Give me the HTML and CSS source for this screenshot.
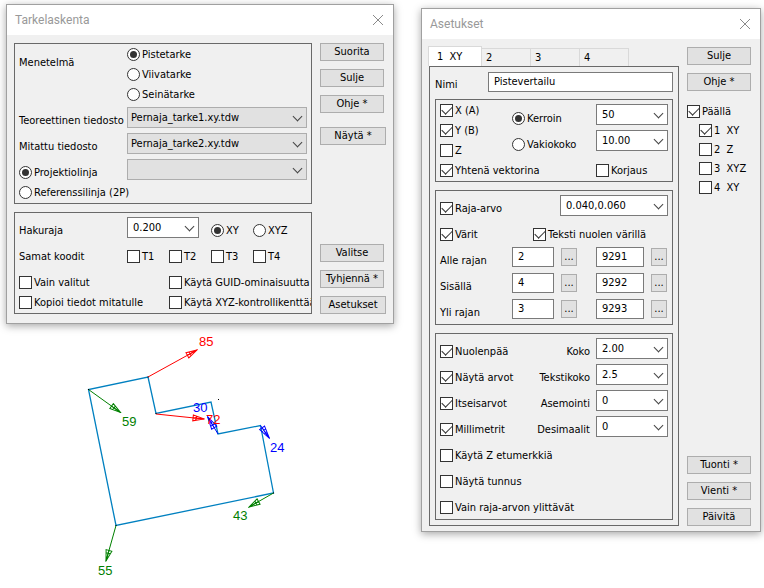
FILE: index.html
```html
<!DOCTYPE html>
<html lang="fi">
<head>
  <meta charset="utf-8">
  <title>Tarkelaskenta</title>
  <link rel="stylesheet" href="styles.css">
</head>
<body>
  <main class="workspace">
    <div class="left">
      <section class="window">
        <header class="titlebar">
          <h1>Tarkelaskenta</h1>
          <button class="close" aria-label="Sulje ikkuna">
            <svg width="10" height="10" viewBox="0 0 10 10"><path d="M0 0L10 10M10 0L0 10"/></svg>
          </button>
        </header>
        <div class="content calc">
          <div class="groups">
            <div class="group files">
              <div class="method">
                <span class="method-label">Menetelmä</span>
                <div class="method-list">
                  <label class="check"><input type="radio" name="method" checked>Pistetarke</label>
                  <label class="check"><input type="radio" name="method">Viivatarke</label>
                  <label class="check"><input type="radio" name="method">Seinätarke</label>
                </div>
              </div>
              <div class="row">
                <label class="caption" for="theory">Teoreettinen tiedosto</label>
                <div class="combo grey fill"><select id="theory"><option>Pernaja_tarke1.xy.tdw</option></select></div>
              </div>
              <div class="row">
                <label class="caption" for="measured">Mitattu tiedosto</label>
                <div class="combo grey fill"><select id="measured"><option>Pernaja_tarke2.xy.tdw</option></select></div>
              </div>
              <div class="row">
                <label class="check caption"><input type="radio" name="line" checked>Projektiolinja</label>
                <div class="combo grey fill"><select aria-label="Projektiolinja"><option></option></select></div>
              </div>
              <label class="check"><input type="radio" name="line">Referenssilinja (2P)</label>
            </div>

            <div class="group search">
              <div class="row">
                <label class="caption" for="limit">Hakuraja</label>
                <div class="combo small"><select id="limit"><option>0.200</option></select></div>
                <label class="check code after-combo"><input type="radio" name="dim" checked>XY</label>
                <label class="check code"><input type="radio" name="dim">XYZ</label>
              </div>
              <div class="row">
                <span class="caption">Samat koodit</span>
                <label class="check code"><input type="checkbox">T1</label>
                <label class="check code"><input type="checkbox">T2</label>
                <label class="check code"><input type="checkbox">T3</label>
                <label class="check code"><input type="checkbox">T4</label>
              </div>
              <div class="row">
                <label class="check half"><input type="checkbox">Vain valitut</label>
                <label class="check"><input type="checkbox">Käytä GUID-ominaisuutta</label>
              </div>
              <div class="row low">
                <label class="check half"><input type="checkbox">Kopioi tiedot mitatulle</label>
                <label class="check"><input type="checkbox">Käytä XYZ-kontrollikenttää</label>
              </div>
            </div>
          </div>

          <div class="side">
            <button class="btn">Suorita</button>
            <button class="btn">Sulje</button>
            <button class="btn">Ohje *</button>
            <button class="btn wide show">Näytä *</button>
            <button class="btn push">Valitse</button>
            <button class="btn">Tyhjennä *</button>
            <button class="btn wide">Asetukset</button>
          </div>
        </div>
      </section>

      <svg class="drawing" viewBox="6 324 388 264">
        <defs>
          <marker id="head-red" class="red" viewBox="-1 -1 13 8" markerWidth="13" markerHeight="8" refX="11" refY="3" orient="auto" markerUnits="userSpaceOnUse">
            <path d="M0 0L11 3L0 6ZM0 3H11M3 1V5"/>
          </marker>
          <marker id="head-green" class="green" viewBox="-1 -1 13 8" markerWidth="13" markerHeight="8" refX="11" refY="3" orient="auto" markerUnits="userSpaceOnUse">
            <path d="M0 0L11 3L0 6ZM0 3H11M3 1V5"/>
          </marker>
          <marker id="head-blue" class="blue" viewBox="-1 -1 15 8" markerWidth="15" markerHeight="8" refX="13" refY="3" orient="auto" markerUnits="userSpaceOnUse">
            <path d="M0 0L13 3L0 6ZM0 3H13M3 1V5M6 2V4"/>
          </marker>
        </defs>
        <polygon class="outline" points="148,377 156,413.5 211,402 218,434 260.5,425.5 273.5,493 116,525.5 88.5,389.5"/>
        <g class="red">
          <path marker-end="url(#head-red)" d="M148 377L197 350"/>
          <path marker-end="url(#head-red)" d="M156 414L204 419"/>
          <text x="199" y="346">85</text>
        </g>
        <g class="green">
          <path marker-end="url(#head-green)" d="M88.5 389.5L120.5 412.5"/>
          <path marker-end="url(#head-green)" d="M116 525.5L106 561"/>
          <path marker-end="url(#head-green)" d="M273.5 493L249 507"/>
          <text x="122" y="426">59</text>
          <text x="98" y="575">55</text>
          <text x="233" y="520">43</text>
        </g>
        <g class="blue">
          <path marker-end="url(#head-blue)" d="M218 434L207.5 416.5"/>
          <path marker-end="url(#head-blue)" d="M260.5 425.5L269.5 438.5"/>
          <text x="193" y="412">30</text>
          <text x="270" y="452">24</text>
        </g>
        <g class="red"><text x="206" y="424">72</text></g>
        <path class="dots" d="M218 399.5h1M147.500 377h1M155.500 413.500h1M88 389.500h1M115.500 525.500h1M273 493h1"/>
      </svg>
    </div>

    <section class="window settings">
      <header class="titlebar">
        <h1>Asetukset</h1>
        <button class="close" aria-label="Sulje ikkuna">
          <svg width="10" height="10" viewBox="0 0 10 10"><path d="M0 0L10 10M10 0L0 10"/></svg>
        </button>
      </header>
      <div class="content">
        <div class="tabbed">
          <nav class="tabs">
            <button class="tab active">1&nbsp; XY</button>
            <button class="tab">2</button>
            <button class="tab">3</button>
            <button class="tab">4</button>
          </nav>
          <div class="panel">
            <div class="name-row">
              <label for="name">Nimi</label>
              <input class="field" id="name" type="text" value="Pistevertailu">
            </div>

            <div class="group vector">
              <div class="columns">
                <div class="axes">
                  <label class="check"><input type="checkbox" checked>X (A)</label>
                  <label class="check"><input type="checkbox" checked>Y (B)</label>
                  <label class="check"><input type="checkbox">Z</label>
                </div>
                <div class="scale">
                  <label class="check"><input type="radio" name="scale" checked>Kerroin</label>
                  <label class="check"><input type="radio" name="scale">Vakiokoko</label>
                </div>
                <div class="values">
                  <div class="combo small"><select aria-label="Kerroin"><option>50</option></select></div>
                  <div class="combo small"><select aria-label="Vakiokoko"><option>10.00</option></select></div>
                </div>
              </div>
              <div class="columns last">
                <label class="check"><input type="checkbox" checked>Yhtenä vektorina</label>
                <label class="check fix"><input type="checkbox">Korjaus</label>
              </div>
            </div>

            <div class="group">
              <div class="row spread">
                <label class="check"><input type="checkbox" checked>Raja-arvo</label>
                <div class="combo medium"><select aria-label="Raja-arvo"><option>0.040,0.060</option></select></div>
              </div>
              <div class="row">
                <label class="check color"><input type="checkbox" checked>Värit</label>
                <label class="check"><input type="checkbox" checked>Teksti nuolen värillä</label>
              </div>
              <div class="row limit">
                <label for="below">Alle rajan</label>
                <input class="field" id="below" type="text" value="2">
                <button class="more">...</button>
                <input class="field code-field" type="text" value="9291" aria-label="Alle rajan koodi">
                <button class="more">...</button>
              </div>
              <div class="row limit">
                <label for="inside">Sisällä</label>
                <input class="field" id="inside" type="text" value="4">
                <button class="more">...</button>
                <input class="field code-field" type="text" value="9292" aria-label="Sisällä koodi">
                <button class="more">...</button>
              </div>
              <div class="row limit">
                <label for="above">Yli rajan</label>
                <input class="field" id="above" type="text" value="3">
                <button class="more">...</button>
                <input class="field code-field" type="text" value="9293" aria-label="Yli rajan koodi">
                <button class="more">...</button>
              </div>
            </div>

            <div class="group">
              <div class="row">
                <label class="check"><input type="checkbox" checked>Nuolenpää</label>
                <label class="right" for="size">Koko</label>
                <div class="combo small"><select id="size"><option>2.00</option></select></div>
              </div>
              <div class="row">
                <label class="check"><input type="checkbox" checked>Näytä arvot</label>
                <label class="right" for="text-size">Tekstikoko</label>
                <div class="combo small"><select id="text-size"><option>2.5</option></select></div>
              </div>
              <div class="row">
                <label class="check"><input type="checkbox" checked>Itseisarvot</label>
                <label class="right" for="position">Asemointi</label>
                <div class="combo small"><select id="position"><option>0</option></select></div>
              </div>
              <div class="row">
                <label class="check"><input type="checkbox" checked>Millimetrit</label>
                <label class="right" for="decimals">Desimaalit</label>
                <div class="combo small"><select id="decimals"><option>0</option></select></div>
              </div>
              <div class="row"><label class="check"><input type="checkbox">Käytä Z etumerkkiä</label></div>
              <div class="row"><label class="check"><input type="checkbox">Näytä tunnus</label></div>
              <div class="row"><label class="check"><input type="checkbox">Vain raja-arvon ylittävät</label></div>
            </div>
          </div>
        </div>

        <div class="side">
          <button class="btn">Sulje</button>
          <button class="btn">Ohje *</button>
          <div class="layers">
            <label class="check"><input type="checkbox" checked>Päällä</label>
            <div class="layer-list">
              <label class="check"><input type="checkbox" checked>1&nbsp; XY</label>
              <label class="check"><input type="checkbox">2&nbsp; Z</label>
              <label class="check"><input type="checkbox">3&nbsp; XYZ</label>
              <label class="check"><input type="checkbox">4&nbsp; XY</label>
            </div>
          </div>
          <button class="btn push">Tuonti *</button>
          <button class="btn">Vienti *</button>
          <button class="btn">Päivitä</button>
        </div>
      </div>
    </section>
  </main>
</body>
</html>
```

FILE: styles.css
```css
* {
  box-sizing: border-box;
}
body {
  margin: 0;
  background: #fff;
  color: #000;
  font: 11px/15px "DejaVu Sans Condensed", "DejaVu Sans", sans-serif;
}
button, input, select {
  font: inherit;
  color: inherit;
  margin: 0;
  border-radius: 0;
}
.workspace {
  display: grid;
  grid-template-columns: minmax(0, 388fr) minmax(0, 340fr);
  align-items: start;
  gap: 27px;
  padding: 4px 3px 0 6px;
}

/* windows */
.window {
  background: #f0f0f0;
  border: 1px solid #a0a0a0;
  box-shadow: 0 2px 8px rgba(0, 0, 0, 0.35);
}
.settings {
  margin-top: 4px;
}
.titlebar {
  display: flex;
  align-items: center;
  justify-content: space-between;
  height: 30px;
  padding: 0 10px 0 8px;
  background: #fff;
}
.titlebar h1 {
  margin: 0;
  font: 12px/16px Roboto, sans-serif;
  color: #999;
}
.close {
  padding: 0;
  border: none;
  background: none;
  line-height: 0;
}
.close svg {
  overflow: visible;
  fill: none;
  stroke: #8a8a8a;
}
.content {
  display: flex;
  gap: 8px;
  padding: 8px 7px 5px;
}
.calc {
  padding-bottom: 9px;
}
.groups, .tabbed {
  flex: 1;
  min-width: 0;
}
.groups {
  display: flex;
  flex-direction: column;
  gap: 8px;
}
.group {
  display: flex;
  flex-direction: column;
  gap: 5px;
  padding: 4px;
  border: 1px solid #696969;
}
.row {
  display: flex;
  align-items: flex-end;
  height: 21px;
}
.low {
  height: 15px;
}

/* tick boxes and radios */
.check {
  display: flex;
  align-items: center;
  gap: 2px;
  white-space: nowrap;
}
.check input {
  appearance: none;
  flex: none;
  display: grid;
  place-items: center;
  width: 13px;
  height: 13px;
  border: 1px solid #333;
  background: #fff;
}
.check input[type="radio"] {
  border-radius: 50%;
}
.check input[type="radio"]:checked::after {
  content: "";
  width: 7px;
  height: 7px;
  border-radius: 50%;
  background: #333;
}
.check input[type="checkbox"]:checked::after {
  content: "";
  width: 9px;
  height: 5px;
  margin-bottom: 3px;
  border: solid #333;
  border-width: 0 0 1px 1px;
  transform: rotate(-45deg);
}

/* drop-downs and fields */
.combo {
  position: relative;
  height: 21px;
}
.combo select {
  appearance: none;
  display: block;
  width: 100%;
  height: 21px;
  padding: 0 16px 1px 5px;
  border: 1px solid #7a7a7a;
  background: #fff;
}
.combo::after {
  content: "";
  position: absolute;
  top: 6px;
  right: 6px;
  width: 6px;
  height: 6px;
  border: solid #444;
  border-width: 0 1px 1px 0;
  transform: rotate(45deg);
  pointer-events: none;
}
.combo.grey select {
  padding: 0 16px 0 3px;
  border-color: #adadad;
  background: #e1e1e1;
}
.fill {
  flex: 1;
}
.small {
  width: 72px;
}
.medium {
  width: 108px;
}
.field {
  min-width: 0;
  height: 20px;
  padding: 0 5px 1px;
  border: 1px solid #7a7a7a;
  background: #fff;
}

/* buttons */
.side {
  display: flex;
  flex-direction: column;
  gap: 8px;
  width: 66px;
}
.btn, .more {
  padding: 0;
  border: 1px solid #adadad;
  background: #e1e1e1;
}
.btn {
  width: 64px;
  height: 18px;
  line-height: 16px;
}
.wide {
  width: 66px;
}
.show {
  margin-top: 6px;
}
.push {
  margin-top: auto;
}

/* Tarkelaskenta */
.files {
  padding: 0 4px 3px;
}
.search {
  padding-bottom: 3px;
  overflow: hidden;
}
.method {
  display: flex;
  margin-bottom: -2px;
}
.method-label {
  width: 108px;
  padding-top: 11px;
}
.method-list .check, .axes .check, .last .check {
  height: 20px;
}
.caption {
  flex: none;
  width: 108px;
}
.code {
  width: 42px;
}
.after-combo {
  margin-left: 12px;
}
.half {
  flex: none;
  width: 150px;
}

/* Asetukset */
.tabs {
  display: flex;
  align-items: flex-end;
  height: 19px;
}
.tab {
  width: 49px;
  height: 18px;
  padding: 0 4px;
  border: 1px solid #d9d9d9;
  border-width: 1px 1px 0 0;
  background: #f0f0f0;
  text-align: left;
}
.tab.active {
  width: 54px;
  height: 20px;
  margin-left: -1px;
  padding: 0 8px;
  border-left-width: 1px;
  background: #fff;
}
.panel {
  display: flex;
  flex-direction: column;
  gap: 8px;
  padding: 5px;
  border: 1px solid #696969;
}
.name-row {
  display: flex;
  align-items: flex-end;
  height: 20px;
  margin-bottom: -1px;
}
.name-row label {
  width: 53px;
}
.name-row .field {
  flex: 1;
}
.vector {
  gap: 0;
  padding: 0 4px 1px;
}
.columns {
  display: flex;
}
.axes {
  width: 72px;
}
.scale {
  flex: 1;
  padding-top: 5px;
}
.scale .check {
  height: 26px;
}
.values {
  display: flex;
  flex-direction: column;
  gap: 5px;
  padding-top: 4px;
}
.last, .spread {
  justify-content: space-between;
}
.fix {
  width: 72px;
}
.color {
  width: 93px;
}
.limit {
  display: grid;
  grid-template-columns: 1fr 42px 16px 60px 16px;
  column-gap: 7px;
  padding-right: 1px;
}
.limit .field {
  margin-bottom: 1px;
}
.limit .code-field {
  width: 48px;
  justify-self: end;
}
.more {
  height: 18px;
  margin-bottom: 2px;
  line-height: 14px;
}
.right {
  flex: 1;
  padding-right: 6px;
  text-align: right;
}
.layers {
  padding-top: 2px;
}
.layers .check {
  height: 20px;
}
.layer-list {
  padding-left: 12px;
}
.layer-list .check {
  height: 19px;
}

/* point drawing */
.drawing {
  display: block;
  width: 100%;
  fill: none;
}
.drawing text {
  font: 13px "Liberation Sans", Arial, sans-serif;
  stroke: none;
}
.outline {
  stroke: #0080c0;
  stroke-width: 1.3;
}
.red {
  stroke: #f00;
}
.green {
  stroke: #008000;
}
.blue {
  stroke: #00f;
}
.red text {
  fill: #f00;
}
.green text {
  fill: #008000;
}
.blue text {
  fill: #00f;
}
.dots {
  stroke: #000;
}
```
